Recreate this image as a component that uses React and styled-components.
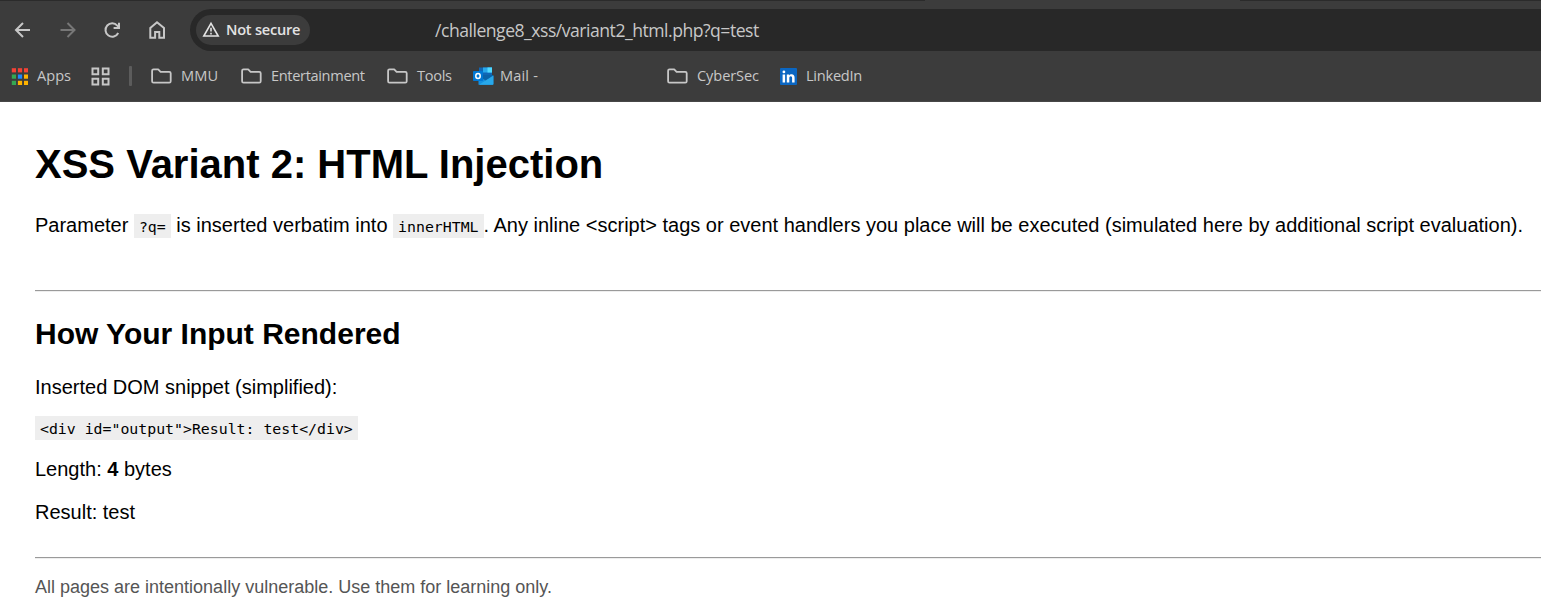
import React from 'react';
import styled, { createGlobalStyle } from 'styled-components';

const Global = createGlobalStyle`
  * { box-sizing: border-box; }
  html, body { margin: 0; background: #fff; overflow: hidden; }
`;

const Window = styled.div`
  width: 1541px;
  height: 612px;
  overflow: hidden;
  background: #fff;
`;

const Chrome = styled.header`
  height: 102px;
  background: #3c3c3c;
  border-bottom: 1px solid #474747;
  font-family: "Open Sans", "Noto Sans", sans-serif;
  color: #c7c7c7;
`;

const TabEdge = styled.div`
  display: flex;
  justify-content: space-between;
  height: 1px;
`;

const EdgeLine = styled.div`
  width: ${(p) => p.$width}px;
  height: 1px;
  background: #2b2b2b;
`;

const Toolbar = styled.div`
  display: flex;
  align-items: center;
  height: 42px;
  margin-top: 8px;
`;

const NavButtons = styled.nav`
  display: flex;
  align-items: center;
  gap: 20.8px;
  width: 190px;
  padding-left: 10.8px;
`;

const Icon = styled.svg`
  display: block;
  flex: none;
  fill: none;
  stroke: ${(p) => p.$color || '#c7c7c7'};
  stroke-width: 2;
`;

const AddressBar = styled.div`
  display: flex;
  align-items: center;
  flex: 1;
  height: 42px;
  padding-left: 6px;
  border-radius: 21px 0 0 21px;
  background: #282828;
`;

const SecurityChip = styled.div`
  display: flex;
  align-items: center;
  gap: 6px;
  width: 114px;
  height: 30px;
  padding-left: 6px;
  border-radius: 15px;
  background: #3c3c3c;
  color: #e3e3e3;
  font-size: 14.6px;
  font-weight: 600;
  line-height: 20px;
  letter-spacing: -0.25px;
  white-space: nowrap;
`;

const ChipText = styled.span`
  padding-bottom: 2px;
`;

const Url = styled.span`
  margin-left: 125px;
  font-size: 17.6px;
  line-height: 24px;
  letter-spacing: -0.49px;
  white-space: nowrap;
`;

const BookmarkBar = styled.div`
  display: flex;
  align-items: center;
  height: 50px;
  padding-left: 11px;
`;

const Bookmark = styled.div`
  display: flex;
  align-items: center;
  gap: ${(p) => p.$gap || 9}px;
  width: ${(p) => p.$width}px;
  flex: none;
`;

const Label = styled.span`
  padding-bottom: 2px;
  font-size: 14.6px;
  line-height: 20px;
  letter-spacing: ${(p) => p.$spacing || 0}px;
  white-space: nowrap;
`;

const Divider = styled.div`
  width: 3px;
  height: 20px;
  border-radius: 1px;
  background: #5c5c5c;
  margin-right: 19px;
`;

const Page = styled.main`
  padding: 39px 0 0 35px;
  font-family: "Liberation Sans", Arial, sans-serif;
  font-size: 20px;
  line-height: 23px;
  color: #000;
  white-space: nowrap;
`;

const Title = styled.h1`
  margin: 0 0 27px;
  font-size: 40px;
  line-height: 46px;
`;

const Subtitle = styled.h2`
  margin: 0 0 25px;
  font-size: 30px;
  line-height: 34px;
`;

const Paragraph = styled.p`
  height: 23px;
  margin: 0 0 ${(p) => p.$after}px;
`;

const Rule = styled.hr`
  height: 2px;
  margin: 0 0 ${(p) => p.$after}px;
  border: 0;
  border-top: 1px solid #9a9a9a;
  border-bottom: 1px solid #eee;
`;

const Code = styled.code`
  padding: 4px 5px 2px;
  background: #eee;
  font-family: "DejaVu Sans Mono", monospace;
  font-size: 14.85px;
`;

const Footer = styled.footer`
  color: #555;
  font-size: 18px;
  line-height: 21px;
`;

const Back = () => (
  <Icon width="24" height="24" viewBox="0 0 24 24">
    <path d="M19 12H5M12 5l-7 7 7 7" />
  </Icon>
);
const Forward = () => (
  <Icon width="24" height="24" viewBox="0 0 24 24" $color="#777">
    <path d="M4.5 12h14M11.5 5l7 7-7 7" />
  </Icon>
);
const Reload = () => (
  <Icon width="24" height="24" viewBox="0 0 24 24">
    <path d="M18.2 15A6.7 6.7 0 1 1 17.3 7.6L19 9.4M19 4.7v5.2h-5.4" />
  </Icon>
);
const Home = () => (
  <Icon width="24" height="24" viewBox="0 0 24 24">
    <path d="M5.3 19.8V10L12 4.2 19 10v9.8h-4.7v-5.9h-4.2v5.9z" />
  </Icon>
);
const Warning = () => (
  <Icon width="18" height="18" viewBox="0 0 18 18" $color="#e3e3e3">
    <path strokeWidth="1.6" d="M9 2.3L16.2 15H1.8zM9 6.7v3.9M9 11.7v1.7" />
  </Icon>
);
const Folder = () => (
  <Icon width="21" height="16" viewBox="0 0 21 16">
    <path
      strokeWidth="1.8"
      strokeLinejoin="round"
      d="M2.5 1.4h4.7l2.4 2.4h8.7q1.4 0 1.4 1.4v8q0 1.4-1.4 1.4H2.5q-1.4 0-1.4-1.4V2.8q0-1.4 1.4-1.4z"
    />
  </Icon>
);

const APP_DOTS = ['#f44336', '#f44336', '#f44336', '#34a853', '#1e88ff', '#ffb300', '#34a853', '#ffb300', '#ffb300'];
const AppsIcon = () => (
  <Icon width="17" height="17" viewBox="0 0 17 17">
    {APP_DOTS.map((c, i) => (
      <rect key={i} x={0.8 + (i % 3) * 6.1} y={0.2 + Math.floor(i / 3) * 6.3} width="4.2" height="4.2" fill={c} stroke="none" />
    ))}
  </Icon>
);
const GridIcon = () => (
  <Icon width="20" height="20" viewBox="0 0 20 20">
    <path d="M2.5 2.5h5.7v5.7H2.5zM12.8 2.5h5.7v5.7h-5.7zM2.5 12.8h5.7v5.7H2.5zM12.8 12.8h5.7v5.7h-5.7z" />
  </Icon>
);
const Outlook = () => (
  <Icon width="21" height="18" viewBox="0 0 21 18">
    <g stroke="none">
      <path fill="#1066b5" d="M6 .5h13v9H6z" />
      <path fill="#28a8ea" d="M10 .5h9v5h-9z" />
      <path fill="#50d9ff" d="M14.5 .5H19v5h-4.5z" />
      <path fill="#0a63a8" d="M5 8h15v5H5z" />
      <path fill="#1490df" d="M20.4 8.4V17q0 .7-.7.7H5.5V9.5l7.8 4.2z" />
      <path fill="#28a8ea" d="M20.4 8.5L6 17.7h13.7q.7 0 .7-.7z" />
      <rect y="4" width="10" height="10" rx=".8" fill="#0078d4" />
    </g>
    <ellipse cx="5" cy="9" rx="2.2" ry="2.5" stroke="#fff" strokeWidth="1.5" />
  </Icon>
);
const LinkedIn = () => (
  <Icon width="17" height="17" viewBox="0 0 17 17">
    <rect width="17" height="17" rx="1" fill="#0a66c2" stroke="none" />
    <g fill="#fff" stroke="none">
      <circle cx="3.9" cy="3.9" r="1.4" />
      <path d="M2.6 6.4h2.5v8H2.6zM6.8 6.4h2.4v1.1c.5-.8 1.3-1.3 2.4-1.3 2.1 0 3 1.3 3 3.5v4.7h-2.5v-4.2c0-1.2-.4-1.9-1.3-1.9-1 0-1.5.7-1.5 1.9v4.2H6.8z" />
    </g>
  </Icon>
);

export default function App() {
  return (
    <Window>
      <Global />
      <Chrome>
        <TabEdge>
          <EdgeLine $width={925} />
          <EdgeLine $width={301} />
        </TabEdge>
        <Toolbar>
          <NavButtons>
            <Back />
            <Forward />
            <Reload />
            <Home />
          </NavButtons>
          <AddressBar>
            <SecurityChip>
              <Warning />
              <ChipText>Not secure</ChipText>
            </SecurityChip>
            <Url>/challenge8_xss/variant2_html.php?q=test</Url>
          </AddressBar>
        </Toolbar>
        <BookmarkBar>
          <Bookmark $width={79}><AppsIcon /><Label>Apps</Label></Bookmark>
          <Bookmark $width={39}><GridIcon /></Bookmark>
          <Divider />
          <Bookmark $width={90}><Folder /><Label $spacing={0.15}>MMU</Label></Bookmark>
          <Bookmark $width={146}><Folder /><Label $spacing={-0.35}>Entertainment</Label></Bookmark>
          <Bookmark $width={86}><Folder /><Label $spacing={-0.3}>Tools</Label></Bookmark>
          <Bookmark $width={194} $gap={6}><Outlook /><Label $spacing={0.15}>Mail -</Label></Bookmark>
          <Bookmark $width={113}><Folder /><Label $spacing={-0.1}>CyberSec</Label></Bookmark>
          <Bookmark $width={90}><LinkedIn /><Label $spacing={-0.25}>LinkedIn</Label></Bookmark>
        </BookmarkBar>
      </Chrome>
      <Page>
        <Title>XSS Variant 2: HTML Injection</Title>
        <Paragraph $after={53}>
          Parameter <Code>?q=</Code> is inserted verbatim into <Code>innerHTML</Code>. Any inline &lt;script&gt; tags or
          event handlers you place will be executed (simulated here by additional script evaluation).
        </Paragraph>
        <Rule $after={25} />
        <Subtitle>How Your Input Rendered</Subtitle>
        <Paragraph $after={17}>Inserted DOM snippet (simplified):</Paragraph>
        <Paragraph $after={19}><Code>{'<div id="output">Result: test</div>'}</Code></Paragraph>
        <Paragraph $after={20}>Length: <b>4</b> bytes</Paragraph>
        <Paragraph $after={33}>Result: test</Paragraph>
        <Rule $after={18} />
        <Footer>All pages are intentionally vulnerable. Use them for learning only.</Footer>
      </Page>
    </Window>
  );
}
